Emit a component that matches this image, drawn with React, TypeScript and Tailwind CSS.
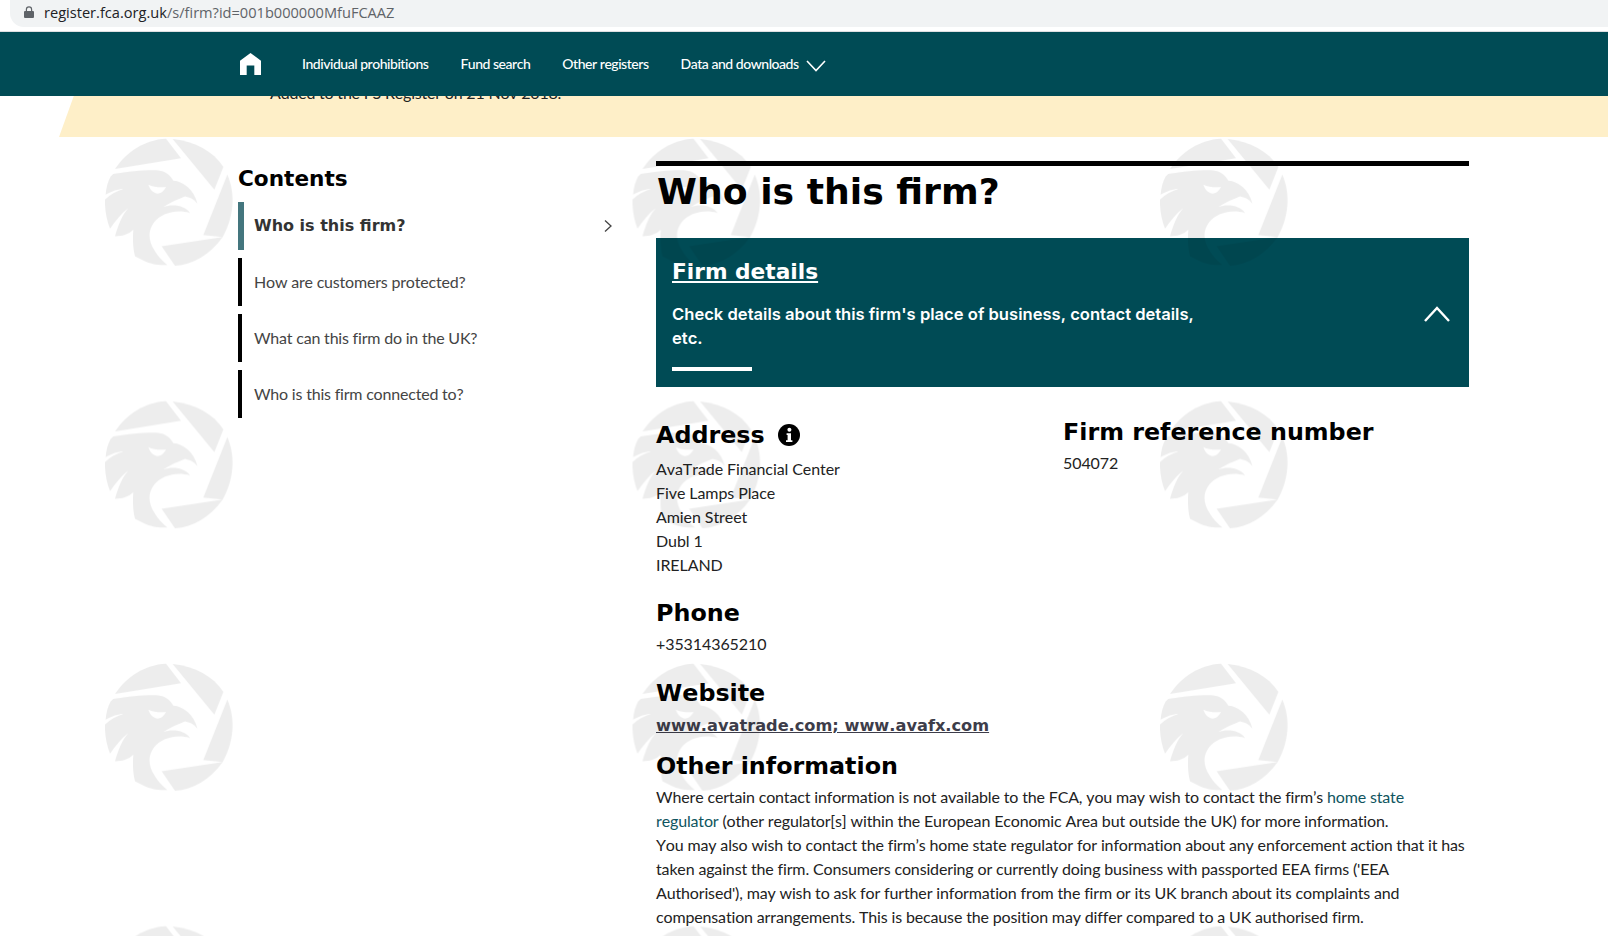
const lato = "font-['Lato',sans-serif] [font-kerning:none] tracking-[-0.08px]";
const heading = "font-['DejaVu_Sans',sans-serif] font-bold text-black tracking-normal";

const contents = [
  "How are customers protected?",
  "What can this firm do in the UK?",
  "Who is this firm connected to?",
];

const addressLines = ["AvaTrade Financial Center", "Five Lamps Place", "Amien Street", "Dubl 1", "IRELAND"];

const navItems = ["Individual prohibitions", "Fund search", "Other registers", "Data and downloads"];

// eagle watermark, traced from the reference in a 3x coordinate space
const Watermark = () => (
  <svg className="absolute left-0 right-0 bottom-0 top-[138px] h-[798px] w-full pointer-events-none z-[5]">
    <defs>
      <pattern id="eagle" x="105" y="0" width="527.5" height="262.5" patternUnits="userSpaceOnUse">
        <g transform="scale(0.3333) translate(-45 -25)" fill="#000" fillOpacity="0.07">
          <path d="M75 118 C110 65 165 30 228 27 L273 86 Z" />
          <path d="M248 28 C315 35 370 65 400 112 L373 180 Z" />
          <path d="M412 135 C438 195 430 265 398 322 L340 316 Z" />
          <path d="M215 350 L398 322 C360 375 310 405 255 408 Z" />
          <path
            fillRule="evenodd"
            d="M62 140 L70 133 C120 125 170 120 205 122 C225 124 240 135 250 153 C280 155 312 180 322 222 C312 208 300 203 285 200 C265 208 240 218 220 232 C250 222 285 228 300 250 C260 238 215 250 192 278 C172 305 175 335 195 365 C205 382 218 395 232 406 C205 408 180 402 165 395 C155 390 145 385 135 380 C128 350 128 325 130 300 C115 315 95 320 75 320 C85 285 97 255 115 235 C95 250 75 275 60 297 C50 270 44 240 45 210 C60 195 80 185 100 178 C85 178 65 185 47 195 C48 175 54 155 62 140 Z M175 165 C190 172 210 174 228 172 C222 185 212 192 203 192 C190 190 180 180 175 165 Z"
          />
        </g>
      </pattern>
    </defs>
    <rect width="100%" height="100%" fill="url(#eagle)" />
  </svg>
);

const SidebarItem = ({ label }: { label: string }) => (
  <div className="flex h-12 items-center border-l-4 border-black pl-3">
    <span className="text-base tracking-[-0.2px] text-[#444]">{label}</span>
  </div>
);

export default function App() {
  return (
    <div className={`relative h-[936px] overflow-hidden bg-white ${lato}`}>
      <Watermark />

      {/* browser address bar */}
      <div className="h-8 border-b border-[#dedfe1] bg-white pl-2.5">
        <div className="flex h-[27px] items-center rounded-bl-[14px] bg-[#f1f3f4] pb-px pl-3.5">
          <svg width="10" height="12" viewBox="0 0 10 12" className="mb-0.5 fill-[#5f6368]">
            <path d="M1 5h.8V3.4a3.2 3.2 0 0 1 6.4 0V5H9a1 1 0 0 1 1 1v5a1 1 0 0 1-1 1H1a1 1 0 0 1-1-1V6a1 1 0 0 1 1-1zm2-0h4V3.4a2 2 0 0 0-4 0V5z" />
          </svg>
          <span className="ml-[10px] font-['Open_Sans',sans-serif] text-[14.6px] tracking-normal text-[#5f6368]">
            <span className="text-[#202124]">register.fca.org.uk</span>/s/firm?id=001b000000MfuFCAAZ
          </span>
        </div>
      </div>

      {/* site nav */}
      <header className="relative z-10 flex h-16 items-center bg-[#004b55] pl-[240px]">
        <svg width="21" height="22" viewBox="0 0 22 23" className="fill-white">
          <path d="M11 0 L22 8 V23 H15 V13 H7 V23 H0 V8 Z" />
        </svg>
        <nav className="ml-[41px] flex items-center gap-8 text-sm font-medium tracking-[-0.47px] text-white">
          {navItems.map((item) => (
            <a key={item}>{item}</a>
          ))}
        </nav>
        <svg width="20" height="12" viewBox="0 0 20 12" fill="none" stroke="white" strokeWidth="1.6" className="ml-[7px] mt-1">
          <path d="M1 1 L10 10.5 L19 1" />
        </svg>
      </header>

      {/* status strip, scrolled mostly behind the nav */}
      <div className="-mt-5 h-[61px] bg-[#feefc8] pl-[270px] pt-[5px] [clip-path:polygon(81px_0,100%_0,100%_100%,59px_100%)]">
        <span className="text-base tracking-[-0.2px] text-[#222]">Added to the FS Register on 21 Nov 2018.</span>
      </div>

      <main className="flex pl-[238px]">
        <aside className="w-[418px] pt-[30px]">
          <h2 className={`${heading} text-[21.6px] leading-6`}>Contents</h2>
          <div className="mt-[11px] flex flex-col gap-2">
            <div className="flex h-12 items-center justify-between border-l-[6px] border-[#44767e] pl-2.5 pr-[44px]">
              <span className="font-['DejaVu_Sans',sans-serif] text-base font-bold tracking-normal text-[#333]">Who is this firm?</span>
              <svg width="8" height="12" viewBox="0 0 8 12" fill="none" stroke="#444" strokeWidth="1.3">
                <path d="M1 .5 L7 6 L1 11.5" />
              </svg>
            </div>
            {contents.map((label) => (
              <SidebarItem key={label} label={label} />
            ))}
          </div>
        </aside>

        <div className="w-[813px] pt-6">
          <div className="border-t-[5px] border-black pl-px">
            <h1 className={`${heading} pt-px text-[36.2px] leading-[49px]`}>Who is this firm?</h1>
          </div>

          <section className="relative mt-[22px] h-[149px] bg-[#004b55] px-4 pt-[18px] text-white">
            <h2 className="font-['DejaVu_Sans',sans-serif] text-[21.7px] font-bold leading-8 tracking-normal underline">Firm details</h2>
            <p className="mt-[14px] w-[530px] font-['Inter',sans-serif] text-[16.6px] font-semibold leading-6 tracking-normal">
              Check details about this firm's place of business, contact details, etc.
            </p>
            <div className="mt-[17px] h-1 w-20 bg-white" />
            <svg width="26" height="16" viewBox="0 0 26 16" fill="none" stroke="white" strokeWidth="2.4" className="absolute right-[19px] top-[68px]">
              <path d="M1 15 L13 2 L25 15" />
            </svg>
          </section>

          <div className="mt-[27px] flex">
            <div className="w-[407px] pt-[5px]">
              <div className="flex items-center gap-[13px]">
                <h3 className={`${heading} text-[23.8px] leading-8`}>Address</h3>
                <svg width="22" height="22" viewBox="0 0 22 22">
                  <circle cx="11" cy="11" r="11" fill="#000" />
                  <circle cx="11.4" cy="5.8" r="2" fill="#fff" />
                  <path d="M8.6 9.2h4.4v7h1.4v1.8H8v-1.8h1.6v-5.2H8.6z" fill="#fff" />
                </svg>
              </div>
              <div className="mt-[6px] text-base leading-6 text-[#222]">
                {addressLines.map((line) => (
                  <p key={line}>{line}</p>
                ))}
              </div>
            </div>
            <div className="pt-[2px]">
              <h3 className={`${heading} text-[23.8px] leading-8`}>Firm reference number</h3>
              <p className="mt-[3px] text-base leading-6 text-[#222]">504072</p>
            </div>
          </div>

          <div className="mt-5">
            <h3 className={`${heading} text-[23.8px] leading-8`}>Phone</h3>
            <p className="mt-[3px] text-base leading-6 text-[#222]">+35314365210</p>
          </div>
          <div className="mt-[21px]">
            <h3 className={`${heading} text-[23.8px] leading-8`}>Website</h3>
            <a className="mt-[5px] block font-['DejaVu_Sans',sans-serif] text-[16.2px] font-bold leading-6 tracking-normal text-[#3d3d4a] underline">
              www.avatrade.com; www.avafx.com
            </a>
          </div>
          <div className="mt-3">
            <h3 className={`${heading} text-[23.8px] leading-8`}>Other information</h3>
            <p className="mt-[3px] text-base leading-6 tracking-[-0.15px] text-[#222]">
              Where certain contact information is not available to the FCA, you may wish to contact the firm’s{" "}
              <a className="text-[#0f5560]">home state regulator</a> (other regulator[s] within the European Economic Area but outside the UK) for more information.
              <br />
              You may also wish to contact the firm’s home state regulator for information about any enforcement action that it has taken against the firm. Consumers considering or currently doing business with passported EEA firms ('EEA Authorised'), may wish to ask for further information from the firm or its UK branch about its complaints and compensation arrangements. This is because the position may differ compared to a UK authorised firm.
            </p>
          </div>
        </div>
      </main>
    </div>
  );
}
